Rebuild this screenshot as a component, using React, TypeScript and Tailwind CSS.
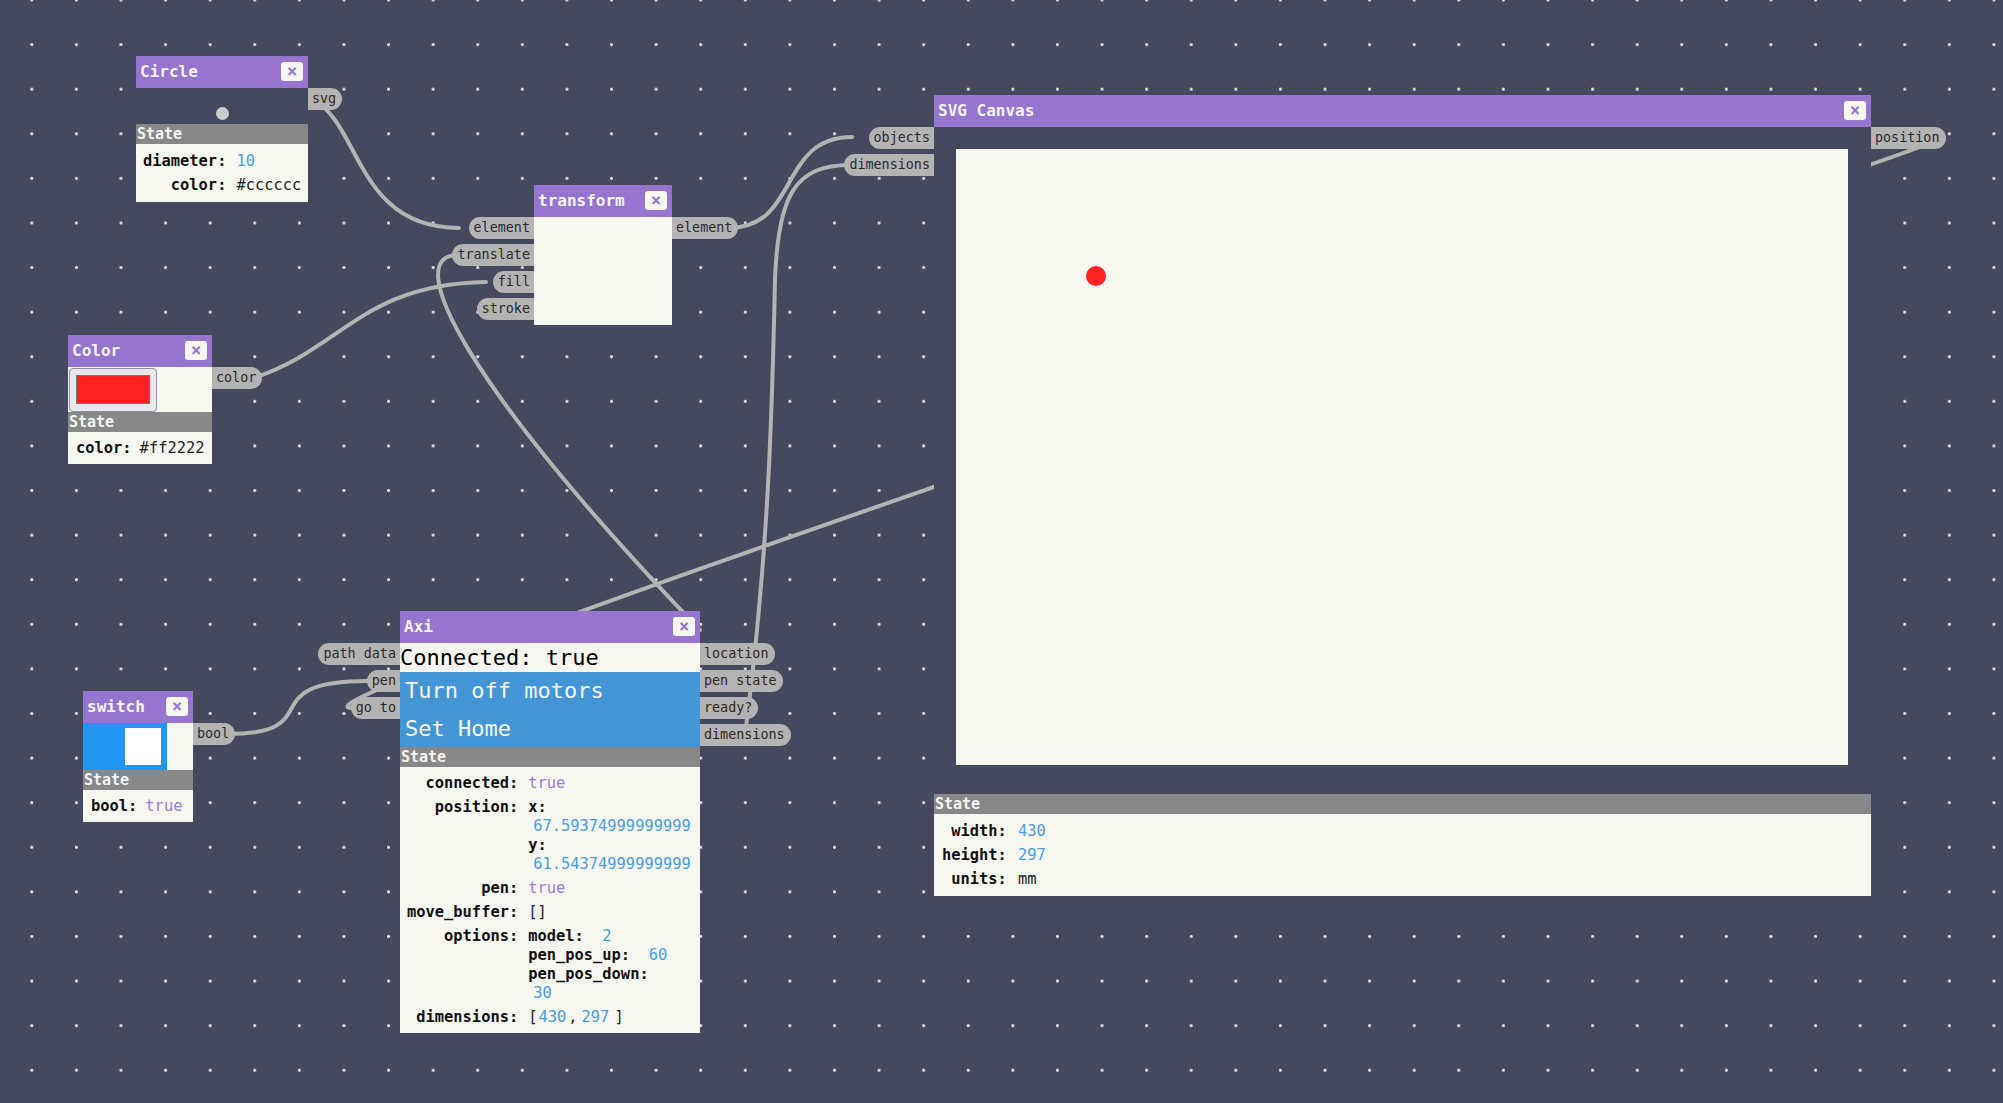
import type { ReactNode } from 'react';

type Side = 'in' | 'out';

const paper = 'bg-[#f7f7f2]';

function CloseButton() {
  return (
    <span className="mb-[2px] flex h-[19px] w-[22px] items-center justify-center rounded-[3px] bg-[#f7f7f2] text-[17px] font-bold leading-none text-[#9575cd]">
      ×
    </span>
  );
}

function Header({ title }: { title: string }) {
  return (
    <div className="flex h-[32px] items-center justify-between bg-[#9575cd] pl-[4px] pr-[5px]">
      <span className="text-[16px] font-bold leading-none text-[#f6f3fc]">{title}</span>
      <CloseButton />
    </div>
  );
}

function Port({ label, side }: { label: string; side: Side }) {
  return (
    <span
      className={`flex h-[22px] items-center whitespace-pre bg-[#b3b3b3] text-[13.4px] leading-none text-[#2b2b2b] ${
        side === 'in' ? 'rounded-l-full pl-[5px] pr-[4px]' : 'rounded-r-full pl-[4px] pr-[6px]'
      }`}
    >
      {label}
    </span>
  );
}

function Ports({ items, side }: { items: string[]; side: Side }) {
  return (
    <div
      className={`absolute top-0 z-10 flex flex-col gap-[5px] ${
        side === 'in' ? 'right-full items-end' : 'left-full items-start'
      }`}
    >
      {items.map(p => (
        <Port key={p} label={p} side={side} />
      ))}
    </div>
  );
}

interface NodeProps {
  title: string;
  className: string;
  inputs?: string[];
  outputs?: string[];
  children?: ReactNode;
}

function Node({ title, className, inputs, outputs, children }: NodeProps) {
  return (
    <div className={`absolute ${className}`}>
      <Header title={title} />
      <div className="relative">
        {inputs && <Ports items={inputs} side="in" />}
        {outputs && <Ports items={outputs} side="out" />}
        {children}
      </div>
    </div>
  );
}

function StateTitle() {
  return (
    <div className="h-[20px] bg-[#888888] pl-[1px] text-[15px] font-bold leading-[20px] text-[#f4f4f4]">
      State
    </div>
  );
}

function K({ children }: { children: ReactNode }) {
  return <div className="py-[2.5px] text-right font-bold text-[#111111]">{children}</div>;
}

function V({ children }: { children: ReactNode }) {
  return <div className="py-[2.5px] text-[#222222]">{children}</div>;
}

const num = 'text-[#4c9ce0]';
const bool = 'text-[#9a7bd4]';

// wires sit under the nodes, the pills hide their ends
function Wires() {
  return (
    <svg className="absolute inset-0" width="2003" height="1103" fill="none" stroke="#b3b3b3" strokeWidth="4" strokeLinecap="round">
      <path d="M312 100 C360 120, 355 228, 459 228" />
      <path d="M250 379 C340 352, 360 284, 486 282" />
      <path d="M458 255 C400 255, 465 385, 700 630" />
      <path d="M728 228 C800 228, 778 137, 852 137" />
      <path d="M850 165 C795 165, 778 195, 775 280 C772 420, 768 560, 745 735" />
      <path d="M1944 138 C1844 180, 252 708, 352 708" />
      <path d="M228 734 C330 734, 250 681, 368 681" />
    </svg>
  );
}

export default function App() {
  return (
    <div className="relative h-screen w-screen overflow-hidden bg-[#46485d] bg-[radial-gradient(circle,#e6e6ec_1.2px,transparent_1.7px)] bg-[length:44.6px_44.6px] bg-[position:9.5px_22.3px] font-['DejaVu_Sans_Mono','Liberation_Mono',monospace]">
      <Wires />

      {/* Circle */}
      <Node title="Circle" className="left-[136px] top-[56px] w-[172px]" outputs={['svg']}>
        <div className="flex h-[36px] justify-center bg-[#46485d] pt-[19px]">
          <span className="h-[13px] w-[13px] rounded-full bg-[#cccccc]" />
        </div>
        <StateTitle />
        <div className={`grid grid-cols-[auto_1fr] gap-x-[10px] ${paper} py-[5px] pl-[7px] text-[15.4px] leading-[19px]`}>
          <K>diameter:</K>
          <V><span className={num}>10</span></V>
          <K>color:</K>
          <V>#cccccc</V>
        </div>
      </Node>

      {/* Color */}
      <Node title="Color" className="left-[68px] top-[335px] w-[144px]" outputs={['color']}>
        <div className={`h-[45px] ${paper} pl-[1px] pt-[1px]`}>
          <div className="h-[44px] w-[88px] rounded-[4px] border border-[#8f8f9d] bg-[#e9e9ed] pl-[6px] pt-[6px]">
            <div className="h-[29px] w-[74px] border border-[#767676] bg-[#ff2222]" />
          </div>
        </div>
        <StateTitle />
        <div className={`grid grid-cols-[auto_1fr] gap-x-[8px] ${paper} py-[4px] pl-[8px] text-[15.4px] leading-[19px]`}>
          <K>color:</K>
          <V>#ff2222</V>
        </div>
      </Node>

      {/* transform */}
      <Node
        title="transform"
        className="left-[534px] top-[185px] w-[138px]"
        inputs={['element', 'translate', 'fill', 'stroke']}
        outputs={['element']}
      >
        <div className={`h-[108px] ${paper}`} />
      </Node>

      {/* switch */}
      <Node title="switch" className="left-[83px] top-[691px] w-[110px]" outputs={['bool']}>
        <div className={`flex h-[47px] ${paper}`}>
          <div className="flex h-full w-[84px] items-center justify-end bg-[#2196f3] pr-[6px]">
            <span className="h-[37px] w-[36px] bg-white" />
          </div>
        </div>
        <StateTitle />
        <div className={`grid grid-cols-[auto_1fr] gap-x-[8px] ${paper} py-[4px] pl-[8px] text-[15.4px] leading-[19px]`}>
          <K>bool:</K>
          <V><span className={bool}>true</span></V>
        </div>
      </Node>

      {/* Axi */}
      <Node
        title="Axi"
        className="left-[400px] top-[611px] w-[300px]"
        inputs={['path data', 'pen', 'go to']}
        outputs={['location', 'pen state', 'ready?', 'dimensions']}
      >
        <div className={`h-[29px] ${paper} text-[22px] leading-[29px] text-black`}>Connected: true</div>
        <div className="h-[38px] bg-[#4495d5] pl-[5px] text-[22px] leading-[38px] text-[#f8f8f8]">Turn off motors</div>
        <div className="h-[37px] bg-[#4495d5] pl-[5px] text-[22px] leading-[37px] text-[#f8f8f8]">Set Home</div>
        <StateTitle />
        <div className={`grid grid-cols-[auto_1fr] gap-x-[10px] ${paper} py-[4px] pl-[7px] text-[15.4px] leading-[19px]`}>
          <K>connected:</K>
          <V><span className={bool}>true</span></V>
          <K>position:</K>
          <V>
            <div className="font-bold text-[#111111]">x:</div>
            <div className={`pl-[5px] ${num}`}>67.59374999999999</div>
            <div className="font-bold text-[#111111]">y:</div>
            <div className={`pl-[5px] ${num}`}>61.54374999999999</div>
          </V>
          <K>pen:</K>
          <V><span className={bool}>true</span></V>
          <K>move_buffer:</K>
          <V>[]</V>
          <K>options:</K>
          <V>
            <div className="whitespace-pre">
              <span className="font-bold text-[#111111]">model:  </span>
              <span className={num}>2</span>
            </div>
            <div className="whitespace-pre">
              <span className="font-bold text-[#111111]">pen_pos_up:  </span>
              <span className={num}>60</span>
            </div>
            <div className="font-bold text-[#111111]">pen_pos_down:</div>
            <div className={`pl-[5px] ${num}`}>30</div>
          </V>
          <K>dimensions:</K>
          <V>
            <div className="flex">
              <span>[</span>
              <span className={`ml-[1px] ${num}`}>430</span>
              <span className="ml-[2px]">,</span>
              <span className={`ml-[4px] ${num}`}>297</span>
              <span className="ml-[5px]">]</span>
            </div>
          </V>
        </div>
      </Node>

      {/* SVG Canvas */}
      <Node
        title="SVG Canvas"
        className="left-[934px] top-[95px] w-[937px]"
        inputs={['objects', 'dimensions']}
        outputs={['position']}
      >
        <div className="h-[667px] bg-[#46485d] pl-[22px] pt-[22px]">
          <div className={`h-[616px] w-[892px] ${paper}`}>
            <svg width="892" height="616">
              <circle cx="140" cy="127" r="10" fill="#ff2222" />
            </svg>
          </div>
        </div>
        <StateTitle />
        <div className={`grid grid-cols-[auto_1fr] gap-x-[11px] ${paper} py-[5px] pl-[8px] text-[15.4px] leading-[19px]`}>
          <K>width:</K>
          <V><span className={num}>430</span></V>
          <K>height:</K>
          <V><span className={num}>297</span></V>
          <K>units:</K>
          <V>mm</V>
        </div>
      </Node>
    </div>
  );
}
